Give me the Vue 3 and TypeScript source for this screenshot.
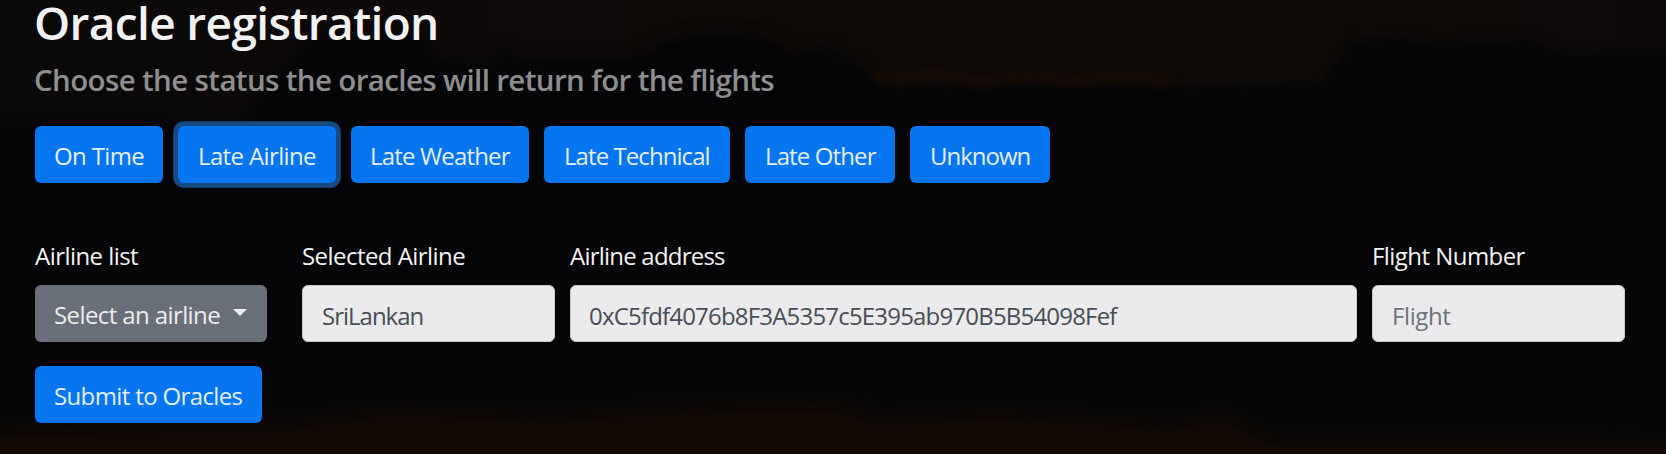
<script setup lang="ts">
import { ref } from 'vue'

interface Status {
  label: string
  cls: string
}

const statuses: Status[] = [
  { label: 'On Time', cls: 'on-time' },
  { label: 'Late Airline', cls: 'late-airline' },
  { label: 'Late Weather', cls: 'late-weather' },
  { label: 'Late Technical', cls: 'late-technical' },
  { label: 'Late Other', cls: 'late-other' },
  { label: 'Unknown', cls: 'unknown' },
]

const selected = ref('Late Airline')
const airline = ref('SriLankan')
const address = ref('0xC5fdf4076b8F3A5357c5E395ab970B5B54098Fef')
const flight = ref('')
</script>

<template>
  <main class="page">
    <svg class="sky" viewBox="0 0 1666 454" preserveAspectRatio="none" aria-hidden="true">
      <defs>
        <filter id="soft" x="-5%" y="-20%" width="110%" height="140%" color-interpolation-filters="sRGB">
          <feGaussianBlur stdDeviation="6" />
        </filter>
        <filter id="glow" x="-5%" y="-100%" width="110%" height="300%" color-interpolation-filters="sRGB">
          <feGaussianBlur stdDeviation="4" />
        </filter>
        <filter id="haze" x="-5%" y="-40%" width="110%" height="180%" color-interpolation-filters="sRGB">
          <feGaussianBlur stdDeviation="12" />
        </filter>
        <linearGradient id="dusk" x1="0" y1="0" x2="1" y2="0">
          <stop offset="0" stop-color="#0a0808" />
          <stop offset="0.25" stop-color="#0d0908" />
          <stop offset="0.7" stop-color="#100b08" />
          <stop offset="1" stop-color="#0e0908" />
        </linearGradient>
      </defs>
      <rect width="1666" height="454" fill="url(#dusk)" />
      <path
        filter="url(#soft)"
        fill="#050507"
        d="M-20 125 L245 125 L265 85 L290 65 L310 38 L420 33 L438 60 L490 66 L503 48 L520 62 L560 57 L630 60 L660 40 L710 31 L770 36 L800 55 L830 44 L860 65 L885 88 L1010 82 L1180 86 L1320 84 L1350 40 L1400 37 L1440 46 L1530 38 L1560 54 L1690 54 L1690 480 L-20 480 Z"
      />
      <path
        filter="url(#glow)"
        fill="none"
        stroke="#1b0e07"
        stroke-width="7"
        d="M872 76 L900 79 L935 73 L980 83 L1030 76 L1065 81 L1140 77 L1172 82"
      />
      <path
        filter="url(#glow)"
        fill="none"
        stroke="#150b08"
        stroke-width="3"
        d="M640 54 L665 36 L710 29 L770 34 L802 52"
      />
      <path
        filter="url(#haze)"
        fill="#140b05"
        d="M-30 430 L280 425 L390 409 L560 416 L680 406 L850 404 L870 419 L1000 412 L1180 424 L1220 412 L1270 439 L1690 442 L1690 490 L-30 490 Z"
      />
    </svg>

    <div class="content">
      <h1 class="title">Oracle registration</h1>
      <h2 class="subtitle">Choose the status the oracles will return for the flights</h2>

      <div class="statuses">
        <button
          v-for="s in statuses"
          :key="s.label"
          type="button"
          class="btn"
          :class="[s.cls, { focused: selected === s.label }]"
          @click="selected = s.label"
        >
          {{ s.label }}
        </button>
      </div>

      <form class="form" @submit.prevent>
        <div class="field">
          <label class="label">Airline list</label>
          <button type="button" class="btn secondary">Select an airline<span class="caret"></span></button>
        </div>
        <div class="field">
          <label class="label" for="airline">Selected Airline</label>
          <input id="airline" v-model="airline" class="input i-airline" />
        </div>
        <div class="field">
          <label class="label l-address" for="address">Airline address</label>
          <input id="address" v-model="address" class="input i-address" spellcheck="false" />
        </div>
        <div class="field">
          <label class="label" for="flight">Flight Number</label>
          <input id="flight" v-model="flight" class="input" placeholder="Flight" />
        </div>
      </form>

      <button type="button" class="btn submit">Submit to Oracles</button>
    </div>
  </main>
</template>

<style>
body {
  margin: 0;
  background: #050507;
}
</style>

<style scoped>
.page {
  position: relative;
  box-sizing: border-box;
  width: 100%;
  height: 454px;
  overflow: hidden;
  font-family: 'Segoe UI', 'Open Sans', 'Noto Sans', sans-serif;
  font-size: 24px;
  color: #f3f2f3;
}
.sky {
  position: absolute;
  inset: 0;
  width: 100%;
  height: 100%;
}
.content {
  position: relative;
  padding-left: 35px;
}
.title {
  margin: 0 0 0 -1px;
  height: 58px;
  line-height: 45px;
  font-size: 46px;
  font-weight: 600;
  letter-spacing: -0.65px;
  white-space: nowrap;
}
.subtitle {
  margin: 0 0 0 -1px;
  height: 68px;
  line-height: 43px;
  font-size: 29.5px;
  font-weight: 600;
  letter-spacing: -0.63px;
  white-space: nowrap;
  color: #8f8e8f;
}
.statuses {
  display: flex;
  gap: 15px;
  height: 57px;
}
.btn {
  box-sizing: border-box;
  flex: none;
  display: flex;
  align-items: center;
  height: 57px;
  padding: 3px 0 0 19px;
  border: 0;
  border-radius: 6px;
  background: #0675f0;
  color: #e4eefb;
  font: inherit;
  line-height: 36px;
  letter-spacing: -0.63px;
  white-space: nowrap;
  outline: none;
}
.focused {
  box-shadow: 0 0 0 4.8px #174a80;
}
.on-time { width: 128px; }
.late-airline { width: 158px; padding-left: 20px; }
.late-weather { width: 178px; letter-spacing: -0.83px; }
.late-technical { width: 186px; padding-left: 20px; letter-spacing: -0.93px; }
.late-other { width: 150px; padding-left: 20px; letter-spacing: -0.88px; }
.unknown { width: 140px; padding-left: 20px; letter-spacing: -1px; }
.form {
  display: grid;
  grid-template-columns: 252px 253px 787px 253px;
  column-gap: 15px;
  margin-top: 55px;
}
.field {
  display: flex;
  flex-direction: column;
}
.label {
  height: 47px;
  line-height: 36px;
  letter-spacing: -0.55px;
  white-space: nowrap;
}
.l-address {
  letter-spacing: -0.78px;
}
.secondary {
  width: 232px;
  background: #6a7079;
  color: #ececef;
  letter-spacing: -0.6px;
}
.caret {
  margin: -5px 0 0 13px;
  border-top: 7px solid #ececef;
  border-right: 7px solid transparent;
  border-left: 7px solid transparent;
}
.input {
  box-sizing: border-box;
  width: 100%;
  height: 57px;
  padding: 3px 18px 0 19px;
  border: 1px solid #c8cacd;
  border-radius: 6px;
  background: #ebeaed;
  color: #494e55;
  font: inherit;
  letter-spacing: -0.4px;
  outline: none;
}
.i-airline {
  letter-spacing: -1px;
}
.i-address {
  padding-left: 18px;
  letter-spacing: -0.81px;
}
.input::placeholder {
  color: #6d737b;
  opacity: 1;
}
.submit {
  width: 227px;
  margin-top: 24px;
}
</style>
